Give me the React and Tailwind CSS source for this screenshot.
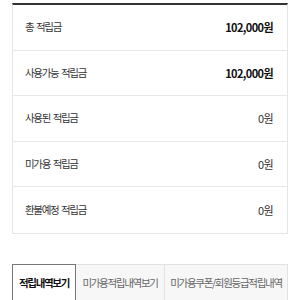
const ROWS = [
  { label: '총 적립금', value: '102,000원', strong: true },
  { label: '사용가능 적립금', value: '102,000원', strong: true },
  { label: '사용된 적립금', value: '0원' },
  { label: '미가용 적립금', value: '0원' },
  { label: '환불예정 적립금', value: '0원' },
];

const TABS = ['적립내역보기', '미가용적립내역보기', '미가용쿠폰/회원등급적립내역'];

export default function App() {
  return (
    <div className="w-[300px] h-[300px] overflow-hidden bg-white px-3 pt-[3px]" style={{ fontFamily: '"Noto Sans CJK KR", "Noto Sans", sans-serif' }}>
      <div className="border-t-2 border-t-[#333] border-x border-b border-x-[#e5e5e5] border-b-[#e5e5e5]">
        {ROWS.map((r, i) => (
          <div key={i} className={`flex items-center justify-between h-[45.5px] pl-3 pr-[14px] ${i < ROWS.length - 1 ? 'border-b border-[#e8e8e8]' : ''}`}>
            <span className="text-[10.5px] tracking-[-1.3px] [word-spacing:1.5px] text-[#353535]">{r.label}</span>
            <span className={`text-[11px] tracking-[-0.6px] ${r.strong ? 'font-bold text-[#111]' : 'text-[#333]'}`}>{r.value}</span>
          </div>
        ))}
      </div>
      <div className="flex mt-[30px] h-[60px]">
        {TABS.map((t, i) => (
          <div key={i} className={`flex justify-center pt-[10px] text-[10.5px] tracking-[-1.3px] ${i === 0 ? 'w-[64px] bg-white border border-[#777] border-b-0 font-bold text-[#111]' : 'bg-[#f7f7f7] border-t border-r border-[#e2e2e2] text-[#666]'} ${i === 1 ? 'w-[89px]' : ''} ${i === 2 ? 'flex-1' : ''}`}>
            {t}
          </div>
        ))}
      </div>
    </div>
  );
}
